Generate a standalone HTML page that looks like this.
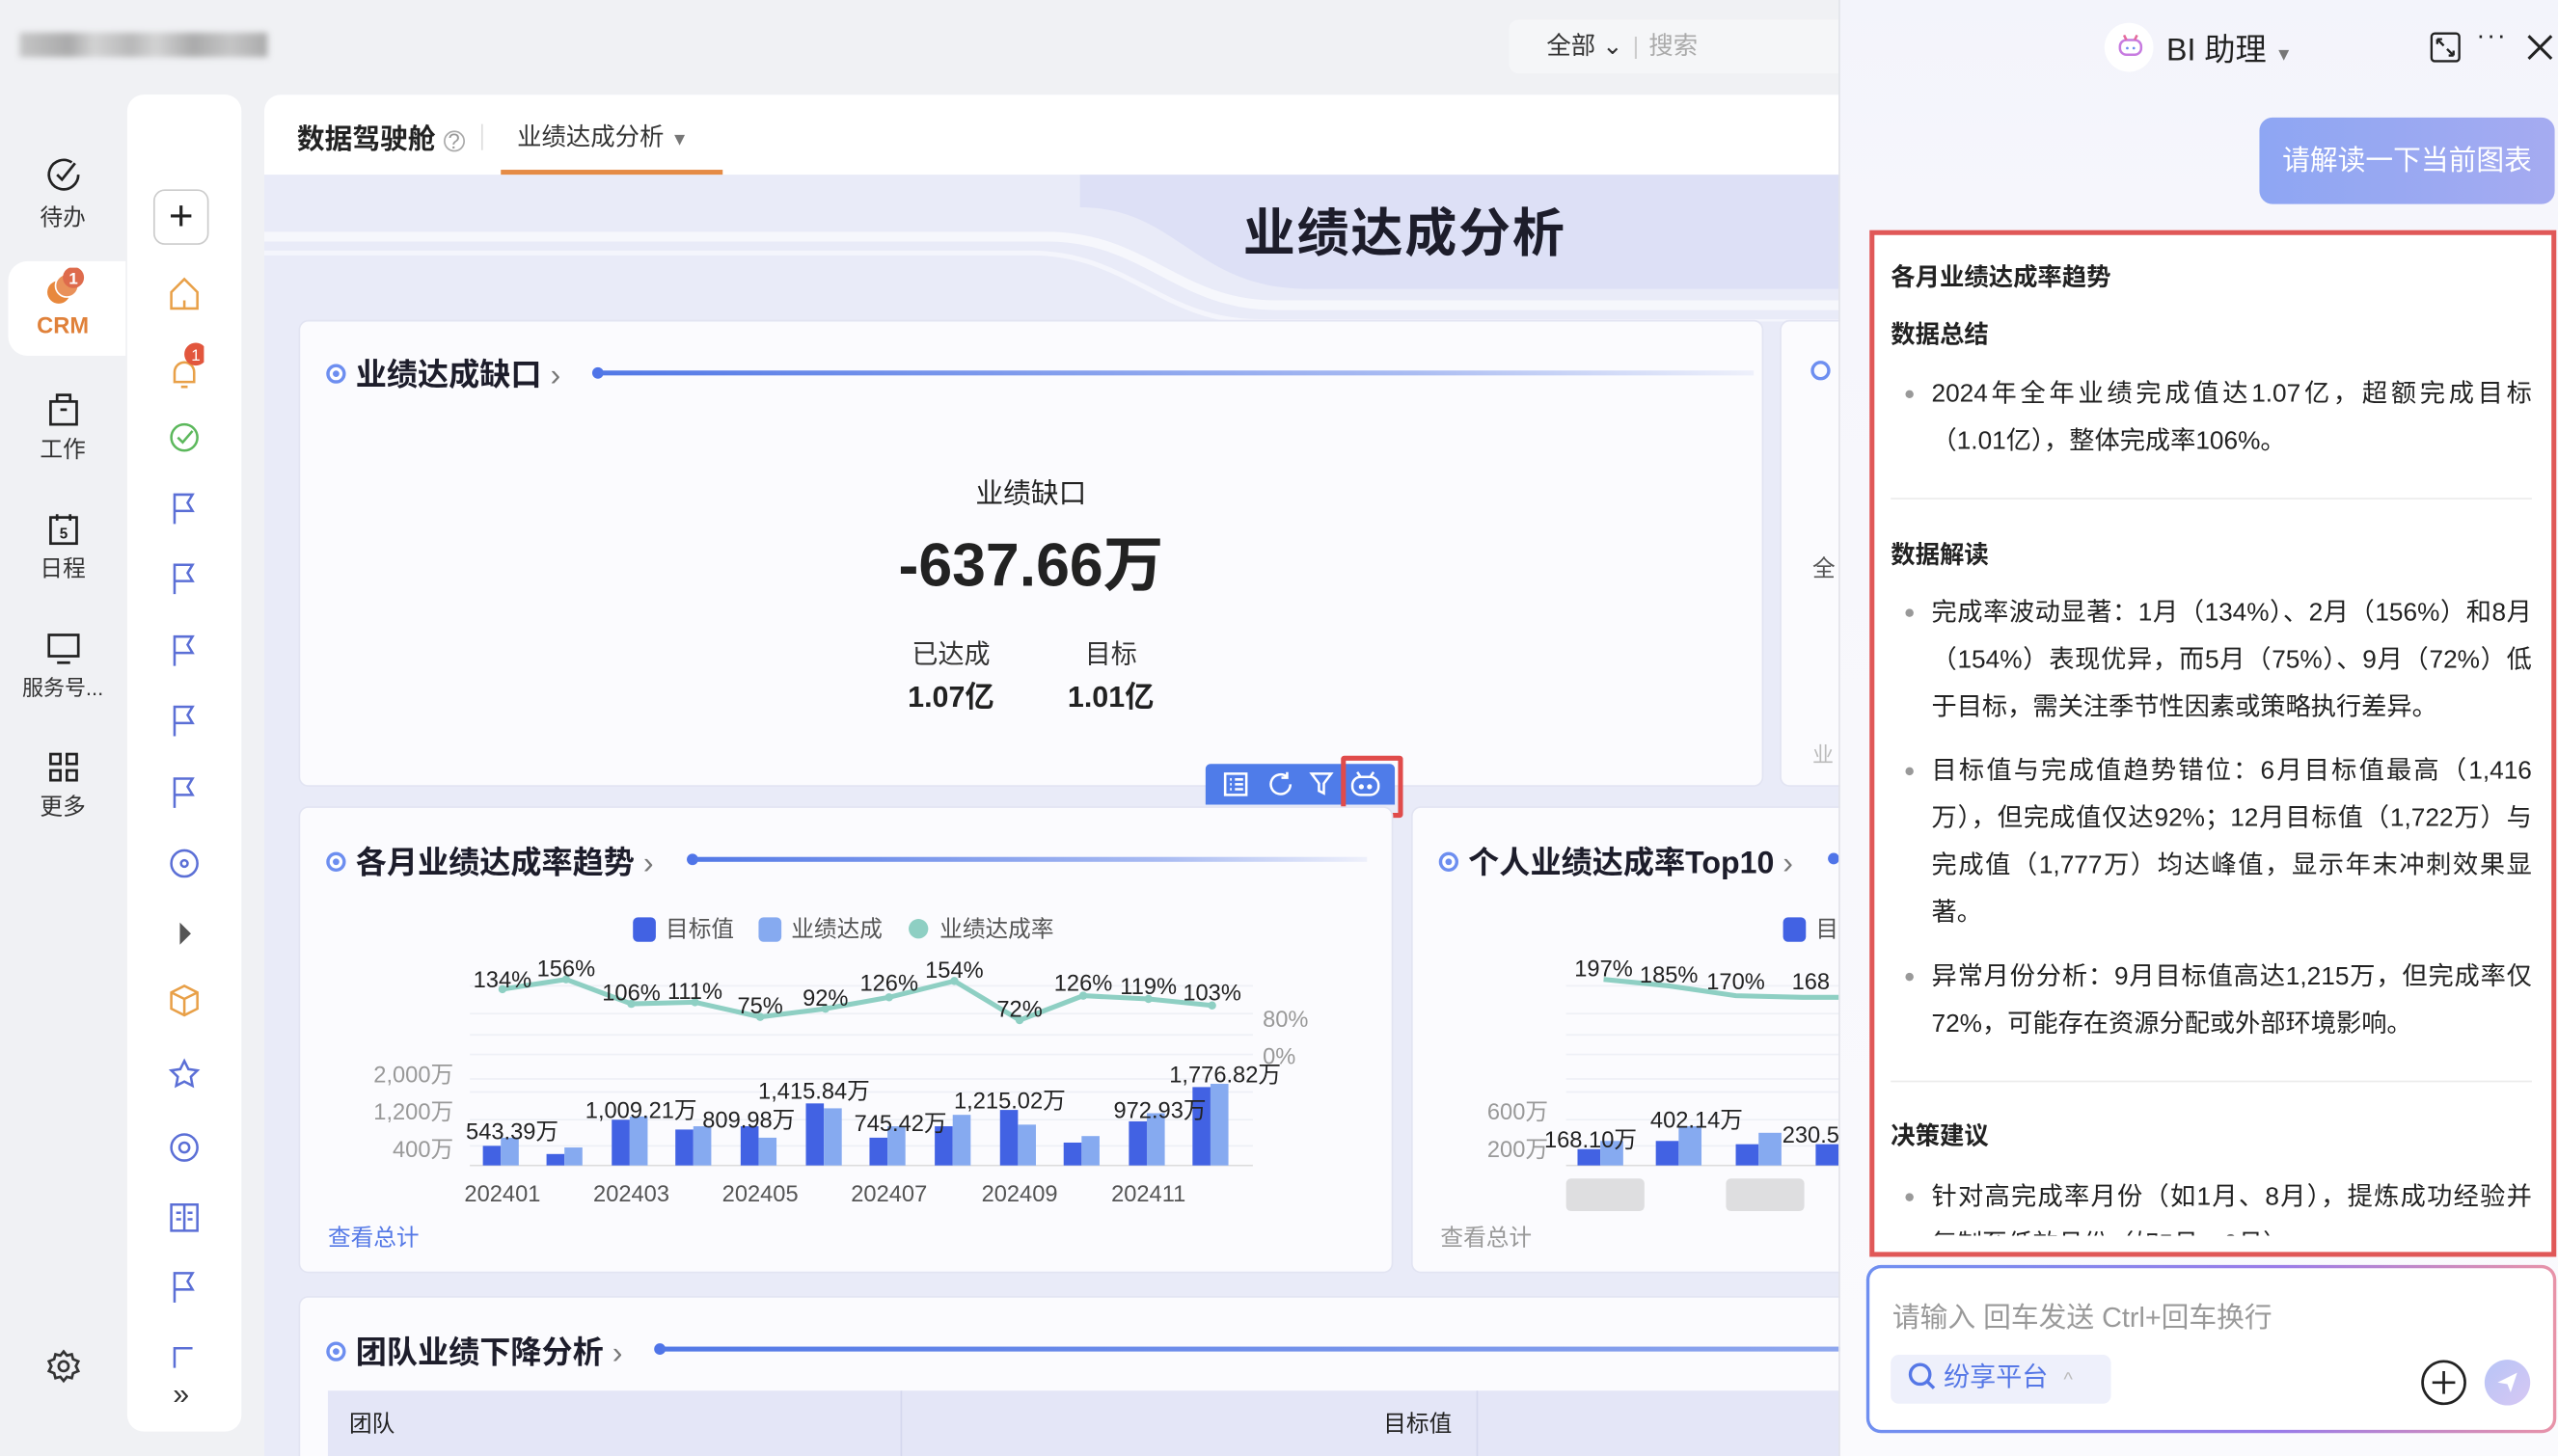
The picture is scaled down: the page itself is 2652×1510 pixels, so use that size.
<!DOCTYPE html>
<html><head><meta charset="utf-8">
<style>
*{margin:0;padding:0;box-sizing:border-box}
html,body{width:2652px;height:1510px;overflow:hidden;background:#f0f1f4}
body{font-family:"Liberation Sans","Noto Sans CJK SC",sans-serif;color:#222}
#w{position:absolute;left:0;top:0;width:1568px;height:892px;transform:scale(1.6913,1.6928);transform-origin:0 0;background:#f0f1f4;overflow:hidden}
.a{position:absolute}
.nav{position:absolute;left:0;width:77px;text-align:center;font-size:14px;color:#333}
.nav svg{display:block;margin:0 auto 3px}
.card{position:absolute;background:#fbfbfe;border:1px solid #e2e4f2;border-radius:6px}
.ct{position:absolute;font-size:19px;font-weight:bold;color:#1d1d2b;white-space:nowrap}
.dot{display:inline-block;width:12px;height:12px;border:2px solid #6d8ef0;border-radius:50%;vertical-align:middle;margin-right:6px;position:relative;top:-2px;box-shadow:inset 0 0 0 2px #fff, inset 0 0 0 6px #6d8ef0}
.ln{position:absolute;left:56px;width:368px;height:29px;line-height:29px;font-size:15.5px;color:#222;white-space:nowrap;text-align:justify;text-align-last:justify}
.ln.e{text-align-last:left}
.bd{position:absolute;left:40px;width:5px;height:5px;border-radius:50%;background:#999}
.hd{position:absolute;left:31px;font-size:15px;font-weight:bold;color:#222}
.hr{position:absolute;left:31px;width:393px;height:1px;background:#ececec}
</style></head><body>
<div id="w">
<div class="a" style="left:12px;top:20px;width:152px;height:15px;background:linear-gradient(90deg,#bbb,#999 20%,#ccc 30%,#aaa 45%,#ccc 55%,#999 70%,#bbb 85%,#999);filter:blur(2px);opacity:.8"></div>
<div class="a" style="left:925px;top:12px;width:210px;height:33px;background:#f5f6f8;border-radius:6px;font-size:15px;line-height:33px;color:#333"><span style="margin-left:23px">全部 ⌄</span><span style="color:#ccc;margin:0 6px">|</span><span style="color:#aaa">搜索</span></div>

<div class="a" style="left:5px;top:160px;width:72px;height:58px;background:#fff;border-radius:12px 0 0 12px"></div>
<div class="nav" style="top:96px"><svg width="24" height="24" viewBox="0 0 24 24" fill="none" stroke="#222" stroke-width="1.6"><path d="M21 11a9 9 0 1 1-4-7.5"/><path d="M8 11l3 3 8-10"/></svg>待办</div>
<div class="nav" style="top:164px;color:#e0813a;font-weight:bold"><svg width="28" height="24" viewBox="0 0 28 24"><circle cx="11" cy="15" r="7" fill="#e8883d"/><circle cx="16" cy="11" r="7" fill="#e9915a" stroke="#fff" stroke-width="1"/><circle cx="20" cy="6" r="6.5" fill="#de6b4c"/><text x="20" y="10" font-size="10" fill="#fff" text-anchor="middle" font-family="Liberation Sans">1</text></svg>CRM</div>
<div class="nav" style="top:240px"><svg width="22" height="22" viewBox="0 0 22 22" fill="none" stroke="#222" stroke-width="1.6"><rect x="3" y="6" width="16" height="14"/><path d="M7 6V2h8v4M9 11h4"/></svg>工作</div>
<div class="nav" style="top:313px"><svg width="22" height="22" viewBox="0 0 22 22" fill="none" stroke="#222" stroke-width="1.6"><rect x="3" y="4" width="16" height="16"/><path d="M7 2v4M15 2v4"/><text x="11" y="17" font-size="9" text-anchor="middle" fill="#222" stroke="none" font-weight="bold">5</text></svg>日程</div>
<div class="nav" style="top:386px;font-size:13px"><svg width="22" height="22" viewBox="0 0 22 22" fill="none" stroke="#222" stroke-width="1.6"><rect x="2" y="3" width="18" height="13"/><path d="M7 20h8"/></svg>服务号...</div>
<div class="nav" style="top:459px"><svg width="22" height="22" viewBox="0 0 22 22" fill="none" stroke="#222" stroke-width="1.6"><rect x="3" y="3" width="6" height="6"/><rect x="13" y="3" width="6" height="6"/><rect x="3" y="13" width="6" height="6"/><rect x="13" y="13" width="6" height="6"/></svg>更多</div>
<div class="nav" style="top:826px"><svg width="22" height="22" viewBox="0 0 22 22" fill="none" stroke="#333" stroke-width="1.6"><circle cx="11" cy="11" r="3"/><path d="M11 2l2 2.5 3-.8.8 3L20 8l-1.5 3L20 14l-3.2 1.3-.8 3-3-.8L11 20l-2-2.5-3 .8-.8-3L2 14l1.5-3L2 8l3.2-1.3.8-3 3 .8z"/></svg></div>

<div class="a" style="left:78px;top:58px;width:70px;height:819px;background:#fff;border-radius:10px"></div>
<div class="a" style="left:94px;top:116px;width:34px;height:34px;border:1px solid #ccc;border-radius:7px;font-size:26px;line-height:30px;text-align:center;color:#222">+</div>
<svg class="a" style="left:101px;top:168px" width="24" height="700" viewBox="0 0 24 700" fill="none" stroke-width="1.5">
<path d="M4 21V11l8-8 8 8v10H4zM12 21v-5" stroke="#e8a048"/>
<path d="M6 60a6 6 0 0 1 12 0v6H6zM10 69h4" stroke="#e8a048"/><circle cx="19" cy="49" r="7" fill="#e2563d" stroke="none"/><text x="19" y="53" font-size="10" fill="#fff" stroke="none" text-anchor="middle">1</text>
<circle cx="12" cy="100" r="8" stroke="#5cb85c"/><path d="M8 100l3 3 6-7" stroke="#5cb85c"/>
<g stroke="#5b6fd6"><path d="M6 153v-18h11l-3 5 3 5H6"/><path d="M6 196v-18h11l-3 5 3 5H6"/><path d="M6 240v-18h11l-3 5 3 5H6"/><path d="M6 283v-18h11l-3 5 3 5H6"/><path d="M6 327v-18h11l-3 5 3 5H6"/>
<circle cx="12" cy="361" r="8"/><circle cx="12" cy="361" r="2"/>
<path d="M10 399l5 5-5 5z" fill="#555" stroke="#555"/>
<circle cx="12" cy="535" r="8"/><circle cx="12" cy="535" r="3"/>
<path d="M4 570v16h16v-16zM12 570v16M7 575h3M7 579h3M14 575h3M14 579h3"/>
<path d="M6 630v-18h11l-3 5 3 5H6"/><path d="M6 670v-12h11"/></g>
<path d="M4 440l8-4 8 4v10l-8 4-8-4zM4 440l8 4 8-4M12 444v10" stroke="#e8a048"/>
<path d="M12 482l2.5 5 5.5.8-4 3.9 1 5.5-5-2.6-5 2.6 1-5.5-4-3.9 5.5-.8z" stroke="#5b6fd6"/>
</svg>
<div class="a" style="left:106px;top:844px;font-size:18px;color:#333">»</div>

<div class="a" style="left:162px;top:58px;width:966px;height:834px;background:#e9ebf8;border-radius:10px 0 0 0;overflow:hidden">
 <div class="a" style="left:0;top:0;width:966px;height:49px;background:#fff"></div>
 <div class="a" style="left:20px;top:13px;font-size:17px;font-weight:bold;color:#222">数据驾驶舱 <span style="font-weight:normal;color:#999;font-size:13px;border:1px solid #aaa;border-radius:50%;display:inline-block;width:13px;height:13px;line-height:12px;text-align:center">?</span></div>
 <div class="a" style="left:133px;top:18px;width:1px;height:16px;background:#ddd"></div>
 <div class="a" style="left:155px;top:15px;font-size:15px;color:#333">业绩达成分析 <span style="color:#777;font-size:11px">▼</span></div>
 <div class="a" style="left:145px;top:46px;width:136px;height:3px;background:#e58b45"></div>
 <svg class="a" style="left:0;top:49px" width="966" height="90"><path d="M0 38 H480 C540 38 560 80 620 80 H966" stroke="#fff" stroke-width="6" fill="none" opacity=".6"/><path d="M0 48 H470 C530 48 550 90 610 90 H966" stroke="#fff" stroke-width="3" fill="none" opacity=".5"/><path d="M500 0 H966 V70 H640 C570 70 560 20 500 20z" fill="#dde0f6"/></svg>
 <div class="a" style="left:600px;top:60px;font-size:32px;font-weight:bold;color:#1d1d2b;letter-spacing:1px">业绩达成分析</div>
</div>

<div class="card" style="left:183px;top:196px;width:898px;height:286px"></div>
<div class="ct" style="left:200px;top:215px"><span class="dot"></span>业绩达成缺口 <span style="color:#777;font-weight:normal">›</span></div>
<div class="a" style="left:363px;top:225px;width:7px;height:7px;border-radius:50%;background:#4f74e8"></div>
<div class="a" style="left:368px;top:227px;width:707px;height:3px;background:linear-gradient(90deg,#5278e6,#a9bbf2 70%,#eef0fb)"></div>
<div class="a" style="left:532px;top:288px;width:200px;text-align:center;font-size:17px;color:#222">业绩缺口</div>
<div class="a" style="left:482px;top:316px;width:300px;text-align:center;font-size:37px;font-weight:bold;color:#222">-637.66万</div>
<div class="a" style="left:543px;top:387px;width:80px;text-align:center;font-size:16px;color:#333">已达成</div>
<div class="a" style="left:543px;top:413px;width:80px;text-align:center;font-size:18px;font-weight:bold">1.07亿</div>
<div class="a" style="left:641px;top:387px;width:80px;text-align:center;font-size:16px;color:#333">目标</div>
<div class="a" style="left:641px;top:413px;width:80px;text-align:center;font-size:18px;font-weight:bold">1.01亿</div>
<div class="card" style="left:1091px;top:196px;width:60px;height:286px"></div>
<div class="a" style="left:1110px;top:221px;width:12px;height:12px;border-radius:50%;border:2px solid #6d8ef0"></div>
<div class="a" style="left:1111px;top:338px;font-size:14px;color:#555">全</div>
<div class="a" style="left:1111px;top:452px;font-size:13px;color:#bbb">业</div>

<div class="a" style="left:739px;top:468px;width:116px;height:25px;background:#4f7ce9;border-radius:3px 3px 0 0"></div>
<svg class="a" style="left:739px;top:468px" width="116" height="25" fill="none" stroke="#fff" stroke-width="1.5">
<rect x="12" y="6" width="13" height="13"/><path d="M15 9.5h1M18 9.5h5M15 12.5h1M18 12.5h5M15 15.5h1M18 15.5h5"/>
<path d="M50 8a6 6 0 1 0 2 4.5M50 5v3.5h-3.5"/>
<path d="M65 6h12l-4.5 6v6l-3-1.5V12z"/>
<rect x="90" y="8" width="16" height="11" rx="5"/><path d="M93 5l2 3M103 5l-2 3"/><circle cx="95.5" cy="14" r=".8" fill="#fff"/><circle cx="100.5" cy="14" r=".8" fill="#fff"/>
</svg>
<div class="a" style="left:822px;top:463px;width:38px;height:38px;border:3px solid #e04b4b;border-radius:2px"></div>

<div class="card" style="left:183px;top:494px;width:671px;height:286px"></div>
<div class="ct" style="left:200px;top:514px"><span class="dot"></span>各月业绩达成率趋势 <span style="color:#777;font-weight:normal">›</span></div>
<div class="a" style="left:421px;top:523px;width:7px;height:7px;border-radius:50%;background:#4f74e8"></div>
<div class="a" style="left:426px;top:525px;width:412px;height:3px;background:linear-gradient(90deg,#5278e6,#a9bbf2 70%,#eef0fb)"></div>
<svg class="a" style="left:183px;top:494px" width="671" height="286" font-family="Liberation Sans,Noto Sans CJK SC,sans-serif">
<g font-size="14" fill="#555"><rect x="205" y="68" width="14" height="15" rx="3" fill="#4262e3"/><text x="225" y="80">目标值</text>
<rect x="282" y="68" width="14" height="15" rx="3" fill="#86aaf0"/><text x="302" y="80">业绩达成</text>
<circle cx="380" cy="75" r="6" fill="#8ecfc3"/><text x="393" y="80">业绩达成率</text></g>
<g stroke="#eef0f6"><path d="M105 110H585M105 127H585M105 140H585M105 152H585M105 167H585M105 175H585M105 192H585M105 208H585"/></g>
<g fill="#999" font-size="14"><text x="591" y="135">80%</text><text x="591" y="158">0%</text><text x="95" y="169" text-anchor="end">2,000万</text><text x="95" y="192" text-anchor="end">1,200万</text><text x="95" y="215" text-anchor="end">400万</text></g>
<path d="M105 220H585" stroke="#ddd"/>
<polyline fill="none" stroke="#8ecfc3" stroke-width="3" points="125,112 164,106 204,121 243,120 283,129 323,124 362,117 402,107 442,131 481,116 521,118 560,122"/>
<g fill="#8ecfc3"><circle cx="125" cy="112" r="2.5"/><circle cx="164" cy="106" r="2.5"/><circle cx="204" cy="121" r="2.5"/><circle cx="243" cy="120" r="2.5"/><circle cx="283" cy="129" r="2.5"/><circle cx="323" cy="124" r="2.5"/><circle cx="362" cy="117" r="2.5"/><circle cx="402" cy="107" r="2.5"/><circle cx="442" cy="131" r="2.5"/><circle cx="481" cy="116" r="2.5"/><circle cx="521" cy="118" r="2.5"/><circle cx="560" cy="122" r="2.5"/></g>
<g font-size="14" fill="#222" text-anchor="middle"><text x="125" y="111">134%</text><text x="164" y="104">156%</text><text x="204" y="119">106%</text><text x="243" y="118">111%</text><text x="283" y="127">75%</text><text x="323" y="122">92%</text><text x="362" y="113">126%</text><text x="402" y="105">154%</text><text x="442" y="129">72%</text><text x="481" y="113">126%</text><text x="521" y="115">119%</text><text x="560" y="119">103%</text></g>
<g fill="#4262e3"><rect x="113" y="208" width="11" height="12"/><rect x="152" y="213" width="11" height="7"/><rect x="192" y="192" width="11" height="28"/><rect x="231" y="198" width="11" height="22"/><rect x="271" y="196" width="11" height="24"/><rect x="311" y="182" width="11" height="38"/><rect x="350" y="203" width="11" height="17"/><rect x="390" y="196" width="11" height="24"/><rect x="430" y="186" width="11" height="34"/><rect x="469" y="206" width="11" height="14"/><rect x="509" y="193" width="11" height="27"/><rect x="548" y="172" width="11" height="48"/></g>
<g fill="#86aaf0"><rect x="124" y="203" width="11" height="17"/><rect x="163" y="209" width="11" height="11"/><rect x="203" y="190" width="11" height="30"/><rect x="242" y="196" width="11" height="24"/><rect x="282" y="203" width="11" height="17"/><rect x="322" y="185" width="11" height="35"/><rect x="361" y="196" width="11" height="24"/><rect x="401" y="189" width="11" height="31"/><rect x="441" y="195" width="11" height="25"/><rect x="480" y="202" width="11" height="18"/><rect x="520" y="188" width="11" height="32"/><rect x="559" y="170" width="11" height="50"/></g>
<g font-size="14" fill="#222" text-anchor="middle"><text x="131" y="204">543.39万</text><text x="210" y="191">1,009.21万</text><text x="276" y="197">809.98万</text><text x="316" y="179">1,415.84万</text><text x="369" y="199">745.42万</text><text x="436" y="185">1,215.02万</text><text x="528" y="191">972.93万</text><text x="568" y="169">1,776.82万</text></g>
<g font-size="14" fill="#555" text-anchor="middle"><text x="125" y="242">202401</text><text x="204" y="242">202403</text><text x="283" y="242">202405</text><text x="362" y="242">202407</text><text x="442" y="242">202409</text><text x="521" y="242">202411</text></g>
<text x="18" y="269" font-size="14" fill="#5478e6">查看总计</text>
</svg>

<div class="card" style="left:865px;top:494px;width:290px;height:286px"></div>
<div class="ct" style="left:882px;top:514px"><span class="dot"></span>个人业绩达成率Top10 <span style="color:#777;font-weight:normal">›</span></div>
<svg class="a" style="left:865px;top:494px" width="263" height="286" font-family="Liberation Sans,Noto Sans CJK SC,sans-serif">
<circle cx="259" cy="32" r="3.5" fill="#4f74e8"/>
<rect x="228" y="68" width="14" height="15" rx="3" fill="#4262e3"/><text x="248" y="80" font-size="14" fill="#555">目</text>
<g stroke="#eef0f6"><path d="M95 110H263M95 127H263M95 140H263M95 152H263M95 167H263M95 175H263M95 192H263M95 208H263"/></g>
<path d="M95 220H263" stroke="#ddd"/>
<polyline fill="none" stroke="#8ecfc3" stroke-width="3" points="118,106 158,110 199,116 240,117 263,117"/>
<g font-size="14" fill="#222" text-anchor="middle"><text x="118" y="104">197%</text><text x="158" y="108">185%</text><text x="199" y="112">170%</text><text x="245" y="112">168</text></g>
<g fill="#999" font-size="14" text-anchor="end"><text x="84" y="192">600万</text><text x="84" y="215">200万</text></g>
<g fill="#4262e3"><rect x="102" y="210" width="14" height="10"/><rect x="150" y="205" width="14" height="15"/><rect x="199" y="207" width="14" height="13"/><rect x="248" y="207" width="14" height="13"/></g>
<g fill="#86aaf0"><rect x="116" y="205" width="14" height="15"/><rect x="164" y="196" width="14" height="24"/><rect x="213" y="200" width="14" height="20"/></g>
<g font-size="14" fill="#222" text-anchor="middle"><text x="110" y="209">168.10万</text><text x="175" y="197">402.14万</text><text x="245" y="206">230.5</text></g>
<rect x="95" y="228" width="48" height="20" fill="#ccc" opacity=".6" rx="3"/><rect x="193" y="228" width="48" height="20" fill="#ccc" opacity=".6" rx="3"/>
<text x="18" y="269" font-size="14" fill="#999">查看总计</text>
</svg>

<div class="card" style="left:183px;top:794px;width:980px;height:120px"></div>
<div class="ct" style="left:200px;top:814px"><span class="dot"></span>团队业绩下降分析 <span style="color:#777;font-weight:normal">›</span></div>
<div class="a" style="left:401px;top:823px;width:7px;height:7px;border-radius:50%;background:#4f74e8"></div>
<div class="a" style="left:406px;top:825px;width:722px;height:3px;background:linear-gradient(90deg,#5278e6,#8ea6ee)"></div>
<div class="a" style="left:201px;top:852px;width:927px;height:40px;background:#e4e6f7"></div>
<div class="a" style="left:552px;top:852px;width:1px;height:40px;background:#d5d8ee"></div>
<div class="a" style="left:905px;top:852px;width:1px;height:40px;background:#d5d8ee"></div>
<div class="a" style="left:214px;top:862px;font-size:14px;color:#222">团队</div>
<div class="a" style="left:848px;top:862px;font-size:14px;color:#222">目标值</div>

<div class="a" style="left:1127px;top:0;width:441px;height:892px;background:linear-gradient(180deg,#f3f4fb,#f6f6fc 15%,#fafafd);border-left:1px solid #e3e4ea">
 <div class="a" style="left:162px;top:14px;width:30px;height:30px;border-radius:50%;background:#fff"></div>
 <svg class="a" style="left:170px;top:20px" width="16" height="16" fill="none" stroke-width="1.5"><rect x="1.5" y="4.5" width="13" height="9" rx="4" stroke="#c77be0"/><path d="M4 1.5l1.5 3M12 1.5l-1.5 3" stroke="#e46a9c"/><circle cx="6" cy="9.5" r=".8" fill="#6a8bf0"/><circle cx="10" cy="9.5" r=".8" fill="#6a8bf0"/></svg>
 <div class="a" style="left:200px;top:16px;font-size:19px;color:#222">BI 助理 <span style="font-size:11px;color:#777">▼</span></div>
 <svg class="a" style="left:361px;top:19px" width="20" height="20" fill="none" stroke="#222" stroke-width="1.4"><rect x="1.5" y="1.5" width="17" height="17" rx="2"/><path d="M5 5l4 4M5 5h3M5 5v3M15 15l-4-4M15 15h-3M15 15v-3"/></svg>
 <div class="a" style="left:390px;top:14px;font-size:16px;color:#222;letter-spacing:1px">···</div>
 <svg class="a" style="left:420px;top:20px" width="18" height="18" stroke="#222" stroke-width="1.8"><path d="M2 2l14 14M16 2L2 16"/></svg>
 <div class="a" style="left:257px;top:72px;width:181px;height:53px;border-radius:8px;background:linear-gradient(90deg,#8ea6f3,#a5abf1);color:#fff;font-size:17px;line-height:53px;text-align:center">请解读一下当前图表</div>
 <div class="a" style="left:18px;top:141px;width:421px;height:629px;border:3px solid #e05858;background:#fff"></div>
 <div class="a" style="left:21px;top:144px;width:415px;height:613px;overflow:hidden">
  <div style="position:absolute;left:-21px;top:-144px;width:441px;height:900px">
  <div class="hd" style="top:159px">各月业绩达成率趋势</div>
  <div class="hd" style="top:194px">数据总结</div>
  <div class="bd" style="top:239px"></div>
  <div class="ln" style="top:227px">2024年全年业绩完成值达1.07亿，超额完成目标</div>
  <div class="ln e" style="top:256px">（1.01亿），整体完成率106%。</div>
  <div class="hr" style="top:305px"></div>
  <div class="hd" style="top:329px">数据解读</div>
  <div class="bd" style="top:373px"></div>
  <div class="ln" style="top:361px">完成率波动显著：1月（134%）、2月（156%）和8月</div>
  <div class="ln" style="top:390px">（154%）表现优异，而5月（75%）、9月（72%）低</div>
  <div class="ln e" style="top:419px">于目标，需关注季节性因素或策略执行差异。</div>
  <div class="bd" style="top:470px"></div>
  <div class="ln" style="top:458px">目标值与完成值趋势错位：6月目标值最高（1,416</div>
  <div class="ln" style="top:487px">万），但完成值仅达92%；12月目标值（1,722万）与</div>
  <div class="ln" style="top:516px">完成值（1,777万）均达峰值，显示年末冲刺效果显</div>
  <div class="ln e" style="top:545px">著。</div>
  <div class="bd" style="top:596px"></div>
  <div class="ln" style="top:584px">异常月份分析：9月目标值高达1,215万，但完成率仅</div>
  <div class="ln e" style="top:613px">72%，可能存在资源分配或外部环境影响。</div>
  <div class="hr" style="top:662px"></div>
  <div class="hd" style="top:685px">决策建议</div>
  <div class="bd" style="top:731px"></div>
  <div class="ln" style="top:719px">针对高完成率月份（如1月、8月），提炼成功经验并</div>
  <div class="ln e" style="top:748px">复制至低效月份（如5月、9月）。</div>
  </div>
 </div>
 <div class="a" style="left:16px;top:775px;width:423px;height:103px;border-radius:9px;background:linear-gradient(90deg,#6f8ff0,#9a7ce8 60%,#e893a8);padding:2px">
  <div style="width:100%;height:100%;background:#fff;border-radius:7px;position:relative">
   <div class="a" style="left:14px;top:16px;font-size:17px;color:#999">请输入 回车发送 Ctrl+回车换行</div>
   <div class="a" style="left:13px;top:53px;width:135px;height:30px;background:#eef0fb;border-radius:5px;font-size:16px;line-height:30px;color:#5577e6;padding-left:10px"><svg width="18" height="18" style="vertical-align:-3px" fill="none" stroke="#5577e6" stroke-width="2"><circle cx="8" cy="8" r="6"/><path d="M12.5 12.5l4 4"/></svg> 纷享平台 <span style="color:#bbb;font-size:12px;margin-left:5px">^</span></div>
   <svg class="a" style="left:337px;top:55px" width="30" height="30" fill="none" stroke="#222" stroke-width="1.6"><circle cx="15" cy="15" r="13"/><path d="M15 8v14M8 15h14"/></svg>
   <div class="a" style="left:377px;top:56px;width:28px;height:28px;border-radius:50%;background:linear-gradient(135deg,#b7c4f6,#d7c8f4)"></div>
   <svg class="a" style="left:384px;top:63px" width="14" height="14" fill="#fff"><path d="M1 7l12-6-4 12-2-5z"/></svg>
  </div>
 </div>
</div>
</div>
</body></html>
